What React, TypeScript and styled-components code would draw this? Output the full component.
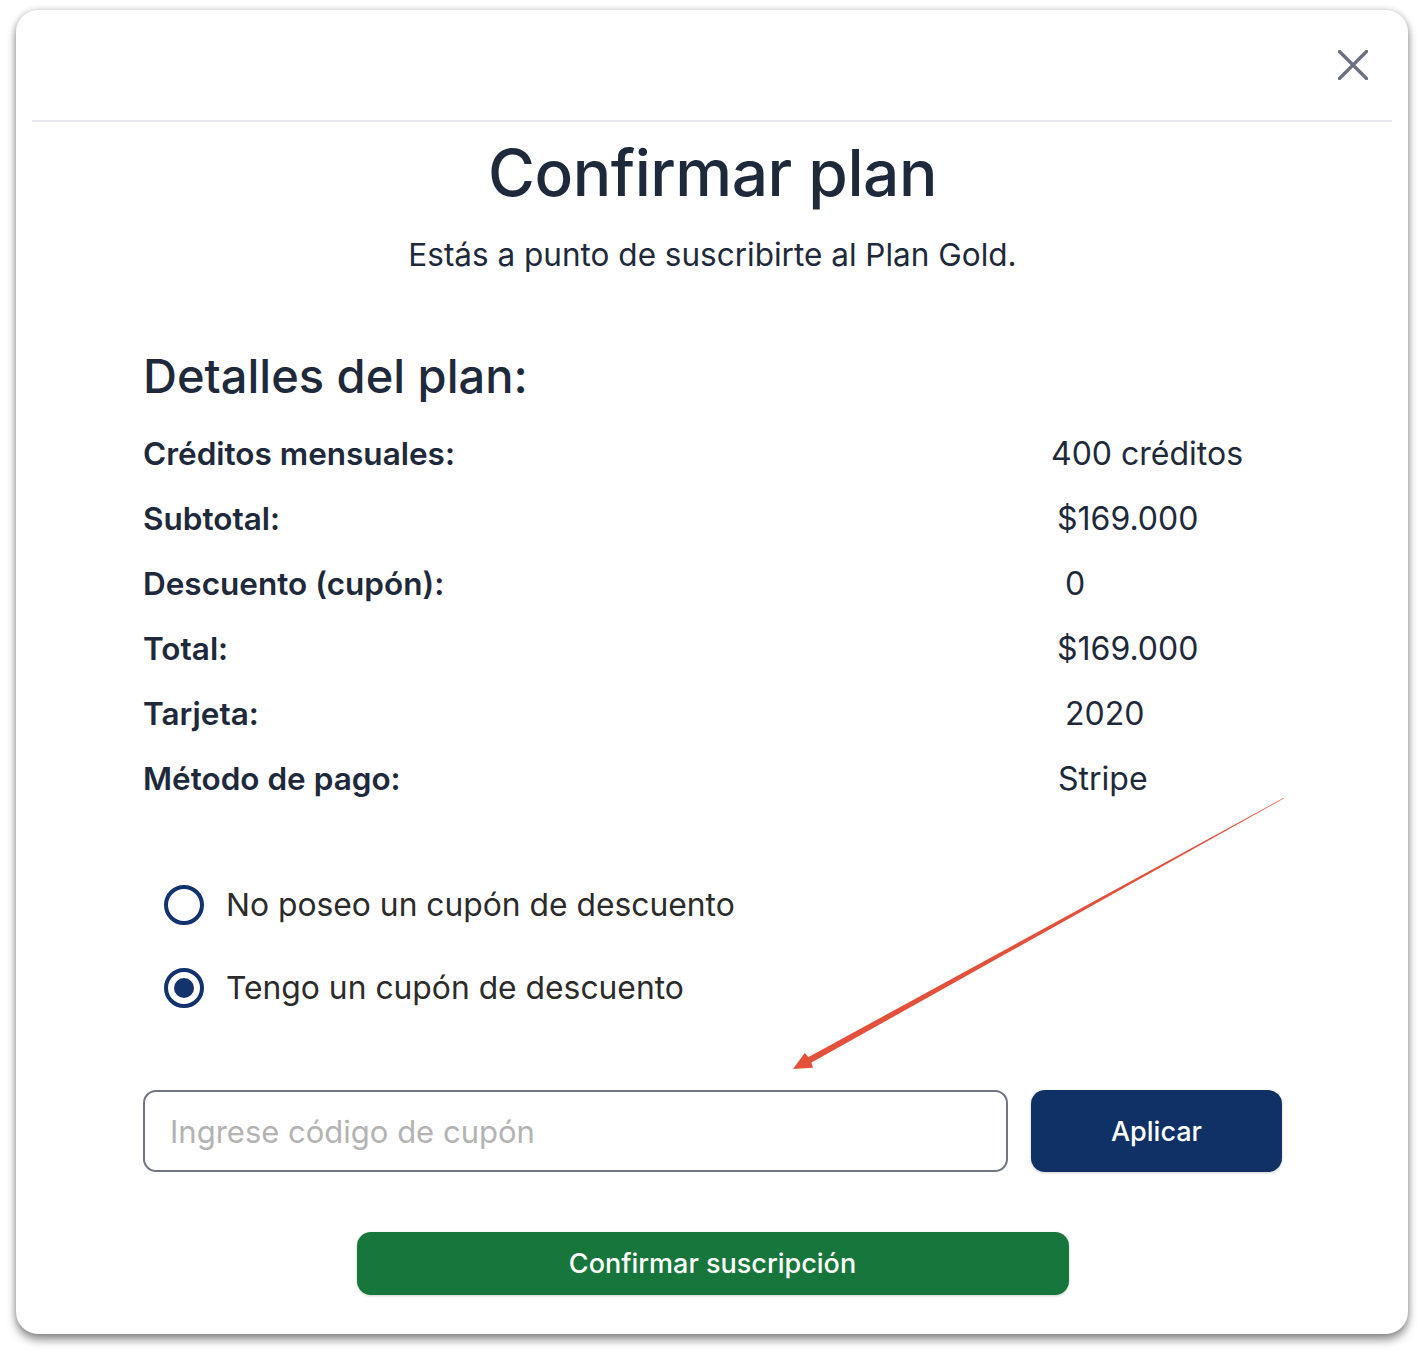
import React from "react";
import styled, { createGlobalStyle } from "styled-components";

const Global = createGlobalStyle`
  html, body { margin: 0; padding: 0; background: #ffffff; }
  body { font-family: Inter, "Noto Sans", "Liberation Sans", sans-serif; color: #1e293b; }
  * { box-sizing: border-box; }
`;

const Page = styled.div`
  padding: 10px 16px 22px 16px;
`;

const Modal = styled.div`
  position: relative;
  width: 1392px;
  height: 1324px;
  background: #ffffff;
  border-radius: 22px;
  box-shadow: 0 6px 10px rgba(0, 0, 0, 0.42), 0 0 6px rgba(0, 0, 0, 0.2);
  display: flex;
  flex-direction: column;
`;

const Header = styled.div`
  height: 112px;
  margin: 0 16px;
  border-bottom: 2px solid #e6e7ee;
  display: flex;
  align-items: center;
  justify-content: flex-end;
  padding-right: 22px;
`;

const CloseButton = styled.button`
  border: none;
  background: transparent;
  padding: 0;
  width: 34px;
  height: 34px;
  display: flex;
  align-items: center;
  justify-content: center;
  cursor: pointer;
`;

const Body = styled.div`
  padding: 11px 126px 0 127px;
  display: flex;
  flex-direction: column;
`;

const Title = styled.h1`
  margin: 0;
  text-align: center;
  font-size: 64px;
  font-weight: 500;
  letter-spacing: -0.5px;
  color: #1e293b;
  line-height: 80px;
`;

const Subtitle = styled.p`
  margin: 24px 0 0;
  text-align: center;
  font-size: 31.5px;
  font-weight: 400;
  color: #1e293b;
  line-height: 36px;
`;

const SectionTitle = styled.h2`
  margin: 75px 0 0;
  font-size: 47px;
  font-weight: 500;
  color: #1e293b;
  line-height: 56px;
`;

const Rows = styled.div`
  margin-top: 31px;
  display: flex;
  flex-direction: column;
  gap: 27px;
`;

const Row = styled.div`
  display: grid;
  grid-template-columns: 908px 1fr;
  align-items: center;
  line-height: 38px;
`;

const Label = styled.span`
  font-size: 31.5px;
  font-weight: 600;
  color: #1e293b;
`;

const Value = styled.span<{ $indent: number }>`
  font-size: 32px;
  font-weight: 400;
  color: #1e293b;
  padding-left: ${(p) => p.$indent}px;
`;

const Options = styled.div`
  margin-top: 87px;
  padding-left: 21px;
  display: flex;
  flex-direction: column;
  gap: 43px;
`;

const Option = styled.label`
  display: flex;
  align-items: center;
  gap: 22px;
  font-size: 31.8px;
  color: #2b2b2b;
  line-height: 40px;
  cursor: pointer;
`;

const RadioCircle = styled.span<{ $checked: boolean }>`
  width: 40px;
  height: 40px;
  border-radius: 50%;
  border: 4px solid #12336b;
  display: flex;
  align-items: center;
  justify-content: center;
  flex-shrink: 0;
  &::after {
    content: "";
    width: 20px;
    height: 20px;
    border-radius: 50%;
    background: #12336b;
    display: ${(p) => (p.$checked ? "block" : "none")};
  }
`;

const CouponRow = styled.div`
  margin-top: 82px;
  display: flex;
  gap: 23px;
  align-items: stretch;
`;

const CouponInput = styled.input`
  flex: 1;
  height: 82px;
  border: 2px solid #6f7585;
  border-radius: 13px;
  padding: 0 25px;
  font-family: inherit;
  font-size: 31px;
  color: #1e293b;
  outline: none;
  &::placeholder {
    color: #b3b3b3;
  }
`;

const ApplyButton = styled.button`
  width: 251px;
  height: 82px;
  border: none;
  border-radius: 14px;
  background: #0f3166;
  color: #ffffff;
  font-family: inherit;
  font-size: 27px;
  font-weight: 500;
  box-shadow: 0 1px 3px rgba(0, 0, 0, 0.2);
  cursor: pointer;
`;

const ConfirmWrap = styled.div`
  margin-top: 60px;
  display: flex;
  justify-content: center;
`;

const ConfirmButton = styled.button`
  width: 712px;
  height: 63px;
  border: none;
  border-radius: 14px;
  background: #17763b;
  color: #ffffff;
  font-family: inherit;
  font-size: 27px;
  font-weight: 500;
  box-shadow: 0 1px 3px rgba(0, 0, 0, 0.2);
  cursor: pointer;
`;

const ArrowLayer = styled.svg`
  position: absolute;
  left: 0;
  top: 0;
  width: 1392px;
  height: 1324px;
  pointer-events: none;
`;

const rows = [
  { label: "Créditos mensuales:", value: "400 créditos", indent: 0 },
  { label: "Subtotal:", value: "$169.000", indent: 6 },
  { label: "Descuento (cupón):", value: "0", indent: 14 },
  { label: "Total:", value: "$169.000", indent: 6 },
  { label: "Tarjeta:", value: "2020", indent: 14 },
  { label: "Método de pago:", value: "Stripe", indent: 7 },
];

function Arrow() {
  const ox = 16;
  const oy = 10;
  const S = [1284 - ox, 798 - oy];
  const E = [806 - ox, 1062 - oy];
  const T = [793 - ox, 1069 - oy];
  const n = [0.483, 0.876];
  const u = [-0.876, 0.483];
  const pt = (p: number[]) => `${p[0].toFixed(1)},${p[1].toFixed(1)}`;
  const shaft = [
    [S[0] + n[0] * 0.3, S[1] + n[1] * 0.3],
    [E[0] + n[0] * 3.2, E[1] + n[1] * 3.2],
    [E[0] - n[0] * 3.2, E[1] - n[1] * 3.2],
    [S[0] - n[0] * 0.3, S[1] - n[1] * 0.3],
  ];
  const B = [T[0] - u[0] * 18, T[1] - u[1] * 18];
  const head = [
    T,
    [B[0] + n[0] * 8.5, B[1] + n[1] * 8.5],
    [B[0] + u[0] * -2, B[1] + u[1] * -2],
    [B[0] - n[0] * 8.5, B[1] - n[1] * 8.5],
  ];
  return (
    <ArrowLayer viewBox="0 0 1392 1324">
      <polygon points={shaft.map(pt).join(" ")} fill="#e4513b" />
      <polygon points={head.map(pt).join(" ")} fill="#e4513b" />
    </ArrowLayer>
  );
}

export default function App() {
  const [hasCoupon, setHasCoupon] = React.useState(true);
  return (
    <Page>
      <Global />
      <Modal>
        <Header>
          <CloseButton aria-label="Cerrar">
            <svg width="30" height="30" viewBox="0 0 30 30">
              <path d="M1.5 1.5 L28.5 28.5 M28.5 1.5 L1.5 28.5" stroke="#6b7280" strokeWidth="3.4" strokeLinecap="round" />
            </svg>
          </CloseButton>
        </Header>
        <Body>
          <Title>Confirmar plan</Title>
          <Subtitle>Estás a punto de suscribirte al Plan Gold.</Subtitle>
          <SectionTitle>Detalles del plan:</SectionTitle>
          <Rows>
            {rows.map((r) => (
              <Row key={r.label}>
                <Label>{r.label}</Label>
                <Value $indent={r.indent}>{r.value}</Value>
              </Row>
            ))}
          </Rows>
          <Options>
            <Option onClick={() => setHasCoupon(false)}>
              <RadioCircle $checked={!hasCoupon} />
              No poseo un cupón de descuento
            </Option>
            <Option onClick={() => setHasCoupon(true)}>
              <RadioCircle $checked={hasCoupon} />
              Tengo un cupón de descuento
            </Option>
          </Options>
          <CouponRow>
            <CouponInput placeholder="Ingrese código de cupón" />
            <ApplyButton>Aplicar</ApplyButton>
          </CouponRow>
          <ConfirmWrap>
            <ConfirmButton>Confirmar suscripción</ConfirmButton>
          </ConfirmWrap>
        </Body>
        <Arrow />
      </Modal>
    </Page>
  );
}
